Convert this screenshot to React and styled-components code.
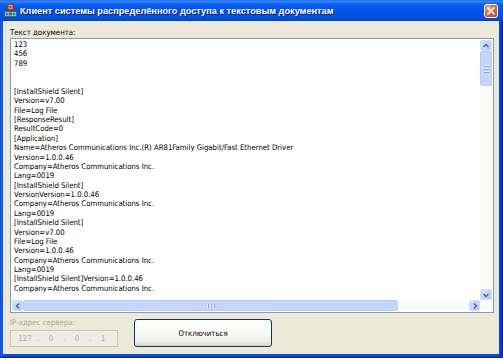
import React from "react";
import styled, { createGlobalStyle } from "styled-components";

const Global = createGlobalStyle`
  html, body { margin: 0; padding: 0; background: #ECE9D8; }
  body { width: 503px; height: 358px; overflow: hidden; }
`;

const UI_FONT = `"DejaVu Sans Condensed", "Liberation Sans", sans-serif`;

const Window = styled.div`
  width: 503px;
  height: 358px;
  box-sizing: border-box;
  display: flex;
  flex-direction: column;
  background: linear-gradient(to right, #0831D9 0px, #166AEE 1px, #0055E5 3px, #0055E5 calc(100% - 4px), #0637CF calc(100% - 2px), #001EA0 100%);
  box-shadow: inset 0 -1px 0 #001EA0, inset 0 -2px 0 #0637CF;
  font-family: ${UI_FONT};
`;

const TitleBar = styled.div`
  height: 21px;
  flex: none;
  display: flex;
  align-items: center;
  gap: 3px;
  padding: 0 5px 0 4px;
  background: linear-gradient(to bottom, #0A61F0 0px, #3D8CF7 1px, #1A6CF4 3px, #0058EE 6px, #0055E8 12px, #0052E0 17px, #0049D0 20px, #0040C0 21px);
`;

const TitleText = styled.div`
  flex: 1;
  color: #ffffff;
  font-family: "Liberation Sans", sans-serif;
  font-weight: bold;
  font-size: 9.2px;
  white-space: nowrap;
  text-shadow: 1px 1px 0 #0A1883;
  padding-top: 1px;
`;

const CloseButton = styled.div`
  width: 14px;
  height: 14px;
  box-sizing: border-box;
  border: 1px solid #ffffff;
  border-radius: 3px;
  background: radial-gradient(circle at 30% 25%, #F2A38A 0%, #E2633F 45%, #C63D1A 100%);
  display: flex;
  align-items: center;
  justify-content: center;
`;

const Client = styled.div`
  flex: 1;
  margin: 0 4px 4px 3px;
  background: #ECE9D8;
  display: flex;
  flex-direction: column;
  padding: 6px 5px 7px 7px;
  min-height: 0;
`;

const Label = styled.div`
  font-size: 7.8px;
  line-height: 11px;
  height: 11px;
  color: ${(p) => (p.$disabled ? "#ACA899" : "#000000")};
  white-space: nowrap;
`;

const TextBox = styled.div`
  flex: 1;
  min-height: 0;
  border: 1px solid #7F9DB9;
  padding: 1px;
  background: #ffffff;
  display: grid;
  grid-template-columns: 1fr 12px;
  grid-template-rows: 1fr 11px;
`;

const Content = styled.pre`
  margin: 0;
  padding: 0 0 0 2px;
  overflow: hidden;
  font-family: ${UI_FONT};
  font-size: 7.7px;
  line-height: 9.38px;
  color: #000000;
  white-space: pre;
`;

const VScroll = styled.div`
  display: flex;
  flex-direction: column;
  background: #FBFBF8;
`;

const HScroll = styled.div`
  display: flex;
  background: #FBFBF8;
`;

const Corner = styled.div`
  background: #FBFBF8;
`;

const ArrowButton = styled.div`
  flex: none;
  width: ${(p) => (p.$horizontal ? "11px" : "12px")};
  height: 11px;
  box-sizing: border-box;
  border: 1px solid #D3DEFB;
  border-radius: 2px;
  background: linear-gradient(135deg, #D4E0FD 0%, #C2D3FC 60%, #B3C6F5 100%);
  display: flex;
  align-items: center;
  justify-content: center;
`;

const Thumb = styled.div`
  flex: none;
  box-sizing: border-box;
  ${(p) => (p.$horizontal ? `width: ${p.$size}px; height: 11px;` : `height: ${p.$size}px; width: 12px;`)}
  border: 1px solid #B9CCF6;
  border-radius: 2px;
  background: #C6D6FC;
  display: flex;
  align-items: center;
  justify-content: center;
  flex-direction: ${(p) => (p.$horizontal ? "row" : "column")};
  gap: 1px;
`;

const Grip = styled.div`
  background: #EEF3FE;
  border-${(p) => (p.$horizontal ? "right" : "bottom")}: 1px solid #8CA8E8;
  ${(p) => (p.$horizontal ? "width: 1px; height: 4px;" : "height: 1px; width: 5px;")}
`;

const Track = styled.div`
  flex: 1;
`;

const BottomRow = styled.div`
  flex: none;
  display: flex;
  align-items: flex-end;
  gap: 16px;
  margin-top: 5px;
  height: 29px;
`;

const IpColumn = styled.div`
  width: 108px;
  display: flex;
  flex-direction: column;
  gap: 2px;
`;

const IpField = styled.div`
  height: 17px;
  box-sizing: border-box;
  border: 1px solid #C9C7BA;
  background: #EFEDE2;
  display: flex;
  align-items: center;
  padding-left: 3px;
  font-size: 7.8px;
  color: #ACA899;
`;

const Octet = styled.span`
  width: 22px;
  text-align: center;
`;

const Dot = styled.span`
  width: 4px;
  text-align: center;
`;

const Button = styled.div`
  width: 138px;
  height: 28px;
  box-sizing: border-box;
  border: 1px solid #003C74;
  border-radius: 3px;
  background: linear-gradient(to bottom, #FFFFFF 0%, #F7F7F3 60%, #ECEBE6 85%, #D6D0C5 100%);
  display: flex;
  align-items: center;
  justify-content: center;
  font-size: 7.8px;
  color: #000;
`;

const AppIcon = () => (
  <svg width="13" height="13" viewBox="0 0 13 13">
    <rect x="4" y="0.5" width="5" height="5" fill="#F29A3A" stroke="#B5391A" strokeWidth="1" />
    <rect x="5.5" y="2" width="2" height="2" fill="#E23B2A" />
    <rect x="6" y="5.5" width="1" height="2" fill="#6B6B6B" />
    <rect x="0.5" y="7.5" width="12" height="5" fill="#D8D8D8" stroke="#5A5A5A" strokeWidth="1" />
    <rect x="1.5" y="8.5" width="3" height="3" fill="#2FA33A" />
    <rect x="5" y="8.5" width="3" height="3" fill="#2D62D6" />
    <rect x="8.5" y="8.5" width="3" height="3" fill="#2FA33A" />
  </svg>
);

const CloseX = () => (
  <svg width="8" height="8" viewBox="0 0 8 8">
    <path d="M1 1 L7 7 M7 1 L1 7" stroke="#ffffff" strokeWidth="1.6" strokeLinecap="square" />
  </svg>
);

const Chevron = ({ dir }) => {
  const paths = {
    up: "M1.5 5 L4 2.5 L6.5 5",
    down: "M1.5 3 L4 5.5 L6.5 3",
    left: "M5 1.5 L2.5 4 L5 6.5",
    right: "M3 1.5 L5.5 4 L3 6.5",
  };
  return (
    <svg width="8" height="8" viewBox="0 0 8 8">
      <path d={paths[dir]} fill="none" stroke="#4D6185" strokeWidth="1.4" />
    </svg>
  );
};

const TEXT = `123
456
789


[InstallShield Silent]
Version=v7.00
File=Log File
[ResponseResult]
ResultCode=0
[Application]
Name=Atheros Communications Inc.(R) AR81Family Gigabit/Fast Ethernet Driver
Version=1.0.0.46
Company=Atheros Communications Inc.
Lang=0019
[InstallShield Silent]
VersionVersion=1.0.0.46
Company=Atheros Communications Inc.
Lang=0019
[InstallShield Silent]
Version=v7.00
File=Log File
Version=1.0.0.46
Company=Atheros Communications Inc.
Lang=0019
[InstallShield Silent]Version=1.0.0.46
Company=Atheros Communications Inc.`;

export default function App() {
  return (
    <>
      <Global />
      <Window>
        <TitleBar>
          <AppIcon />
          <TitleText>Клиент системы распределённого доступа к текстовым документам</TitleText>
          <CloseButton>
            <CloseX />
          </CloseButton>
        </TitleBar>
        <Client>
          <Label>Текст документа:</Label>
          <TextBox>
            <Content>{TEXT}</Content>
            <VScroll>
              <ArrowButton>
                <Chevron dir="up" />
              </ArrowButton>
              <Thumb $size={35}>
                <Grip />
                <Grip />
                <Grip />
              </Thumb>
              <Track />
              <ArrowButton>
                <Chevron dir="down" />
              </ArrowButton>
            </VScroll>
            <HScroll>
              <ArrowButton $horizontal>
                <Chevron dir="left" />
              </ArrowButton>
              <Thumb $horizontal $size={375}>
                <Grip $horizontal />
                <Grip $horizontal />
                <Grip $horizontal />
              </Thumb>
              <Track />
              <ArrowButton $horizontal>
                <Chevron dir="right" />
              </ArrowButton>
            </HScroll>
            <Corner />
          </TextBox>
          <BottomRow>
            <IpColumn>
              <Label $disabled>IP-адрес сервера:</Label>
              <IpField>
                <Octet>127</Octet>
                <Dot>.</Dot>
                <Octet>0</Octet>
                <Dot>.</Dot>
                <Octet>0</Octet>
                <Dot>.</Dot>
                <Octet>1</Octet>
              </IpField>
            </IpColumn>
            <Button>Отключиться</Button>
          </BottomRow>
        </Client>
      </Window>
    </>
  );
}
